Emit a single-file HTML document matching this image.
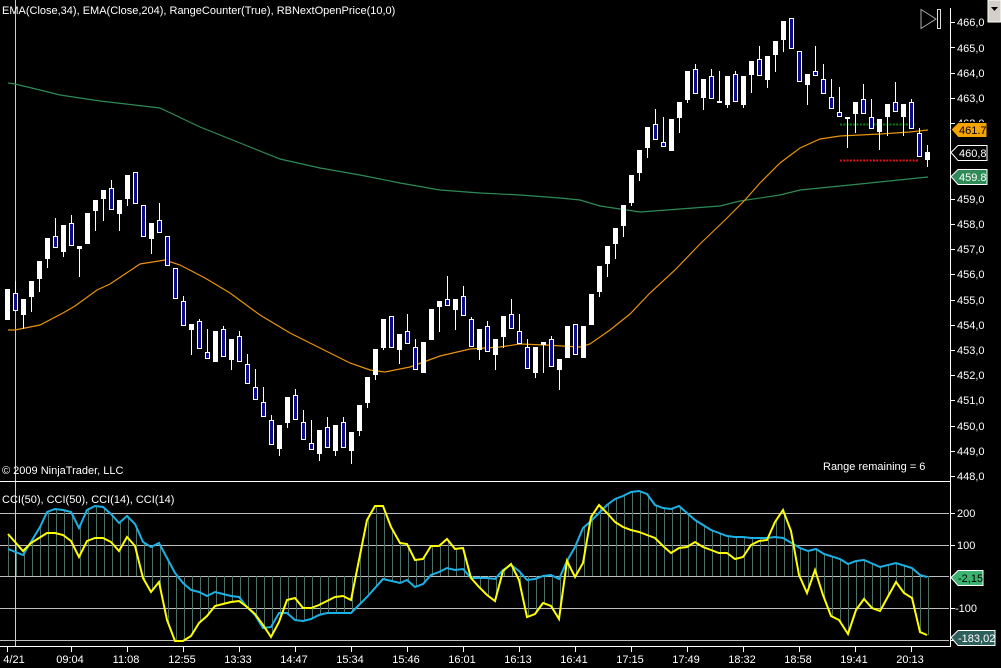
<!DOCTYPE html>
<html><head><meta charset="utf-8"><style>
html,body{margin:0;padding:0;background:#000;width:1001px;height:668px;overflow:hidden}
svg{display:block}
text{font-family:"Liberation Sans",Arial,sans-serif;font-size:11px;fill:#fff}
.w{fill:#fff}
.b{fill:#0a0a8c;stroke:#fff;stroke-width:1}
</style></head><body>
<svg width="1001" height="668" viewBox="0 0 1001 668" xmlns="http://www.w3.org/2000/svg">
<rect width="1001" height="668" fill="#000"/>
<!-- CCI grid -->
<g stroke="#bdbdbd" stroke-width="1">
<line x1="0" y1="513.5" x2="949" y2="513.5"/>
<line x1="0" y1="545.5" x2="949" y2="545.5"/>
<line x1="0" y1="576.5" x2="949" y2="576.5"/>
<line x1="0" y1="608.5" x2="949" y2="608.5"/>
<line x1="0" y1="640.5" x2="949" y2="640.5"/>
</g>
<g id="hist" stroke="#4d6f64" stroke-width="1"></g>
<!-- frame lines -->
<line x1="15.5" y1="0" x2="15.5" y2="646" stroke="#ccc"/>
<line x1="0" y1="481.5" x2="950" y2="481.5" stroke="#fff"/>
<line x1="0" y1="646.5" x2="950" y2="646.5" stroke="#fff"/>
<line x1="950.5" y1="8" x2="950.5" y2="647" stroke="#fff"/>
<!-- EMAs -->
<polyline fill="none" stroke="#2e8b57" stroke-width="1.2" points="8,83 15,84 40,90 60,95 100,101 160,108 200,127 240,143 280,159 320,168 360,175 400,183 440,190 480,193 520,195 560,198 580,200 600,206 640,212 680,209 720,206 740,201 780,195 800,190 860,184 928,177"/>
<polyline fill="none" stroke="#e8930c" stroke-width="1.2" points="8,330 15,330 40,325 63,313 75,306 97,290 110,284 140,264 165,260 180,265 205,278 230,293 260,315 290,333 320,348 350,363 370,370 385,372 410,367 440,356 470,349 500,347 520,344 545,345 580,347 590,344 610,330 630,314 650,293 675,270 700,244 725,220 745,200 760,183 780,163 800,148 820,139 840,136 880,134 910,132 928,130"/>
<!-- dots -->
<line x1="840" y1="124.5" x2="916" y2="124.5" stroke="#0c7a0c" stroke-width="2" stroke-dasharray="2,1.3"/>
<line x1="840" y1="160.5" x2="918" y2="160.5" stroke="#e01010" stroke-width="2" stroke-dasharray="2,1.3"/>
<!-- wicks -->
<path stroke="#fff" stroke-width="1" fill="none" d="M15.5 281V311M23.5 299V329M31.5 281V312M39.5 261V292M47.5 238V268M55.5 218V248M63.5 225V257M71.5 215V246M79.5 246V277M95.5 200V231M103.5 190V221M111.5 180V210M119.5 200V231M127.5 175V206M151.5 223V254M159.5 203V233M183.5 296V326M191.5 324V355M199.5 319V349M207.5 329V359M223.5 326V357M231.5 339V370M239.5 331V362M247.5 354V384M255.5 369V400M263.5 387V417M271.5 415V445M279.5 425V456M287.5 397V428M295.5 389V420M303.5 410V440M311.5 420V450M319.5 430V461M327.5 417V448M335.5 425V456M343.5 417V448M351.5 432V464M359.5 405V436M367.5 377V408M375.5 349V380M383.5 319V350M399.5 334V364M407.5 314V344M415.5 339V370M439.5 301V332M447.5 276V306M455.5 299V330M463.5 286V316M471.5 317V347M479.5 329V360M487.5 321V352M495.5 339V370M503.5 316V348M511.5 299V329M519.5 314V344M527.5 339V369M535.5 347V378M543.5 342V373M551.5 336V367M559.5 359V390M599.5 266V297M607.5 246V277M615.5 228V259M623.5 205V237M631.5 175V206M639.5 150V181M647.5 127V158M655.5 109V140M663.5 117V147M679.5 102V133M687.5 71V103M695.5 64V94M703.5 79V110M711.5 69V99M719.5 71V103M727.5 76V108M735.5 71V102M743.5 76V108M751.5 61V93M759.5 46V76M767.5 56V88M775.5 41V72M783.5 21V52M807.5 74V105M815.5 46V76M823.5 64V94M831.5 79V109M839.5 87V117M847.5 117V148M855.5 102V133M863.5 84V114M871.5 99V129M879.5 119V150M887.5 104V136M895.5 82V112M903.5 104V136M911.5 99V129M919.5 128V157M927.5 145V167"/>
<!-- bodies -->
<rect class="w" x="5" y="289" width="5" height="31"/>
<rect class="b" x="13.5" y="293.5" width="4" height="17"/>
<rect class="w" x="21" y="299" width="5" height="16"/>
<rect class="w" x="29" y="281" width="5" height="16"/>
<rect class="w" x="37" y="261" width="5" height="18"/>
<rect class="w" x="45" y="238" width="5" height="21"/>
<rect class="b" x="53.5" y="236.5" width="4" height="11"/>
<rect class="w" x="61" y="225" width="5" height="27"/>
<rect class="b" x="69.5" y="223.5" width="4" height="22"/>
<rect class="w" x="77" y="246" width="5" height="3"/>
<rect class="w" x="85" y="213" width="5" height="31"/>
<rect class="w" x="93" y="200" width="5" height="11"/>
<rect class="w" x="101" y="190" width="5" height="9"/>
<rect class="b" x="109.5" y="188.5" width="4" height="21"/>
<rect class="w" x="117" y="200" width="5" height="14"/>
<rect class="w" x="125" y="175" width="5" height="24"/>
<rect class="b" x="133.5" y="172.5" width="4" height="31"/>
<rect class="b" x="141.5" y="205.5" width="4" height="31"/>
<rect class="w" x="149" y="223" width="5" height="16"/>
<rect class="b" x="157.5" y="220.5" width="4" height="12"/>
<rect class="b" x="165.5" y="236.5" width="4" height="29"/>
<rect class="b" x="173.5" y="268.5" width="4" height="30"/>
<rect class="b" x="181.5" y="301.5" width="4" height="24"/>
<rect class="w" x="189" y="324" width="5" height="6"/>
<rect class="b" x="197.5" y="321.5" width="4" height="27"/>
<rect class="b" x="205.5" y="352.5" width="4" height="6"/>
<rect class="w" x="213" y="331" width="5" height="31"/>
<rect class="b" x="221.5" y="329.5" width="4" height="27"/>
<rect class="w" x="229" y="339" width="5" height="21"/>
<rect class="b" x="237.5" y="336.5" width="4" height="25"/>
<rect class="b" x="245.5" y="364.5" width="4" height="19"/>
<rect class="b" x="253.5" y="387.5" width="4" height="12"/>
<rect class="b" x="261.5" y="402.5" width="4" height="14"/>
<rect class="b" x="269.5" y="420.5" width="4" height="24"/>
<rect class="w" x="277" y="425" width="5" height="24"/>
<rect class="w" x="285" y="397" width="5" height="26"/>
<rect class="b" x="293.5" y="395.5" width="4" height="24"/>
<rect class="b" x="301.5" y="422.5" width="4" height="17"/>
<rect class="b" x="309.5" y="443.5" width="4" height="6"/>
<rect class="w" x="317" y="430" width="5" height="24"/>
<rect class="b" x="325.5" y="427.5" width="4" height="20"/>
<rect class="w" x="333" y="425" width="5" height="26"/>
<rect class="b" x="341.5" y="422.5" width="4" height="25"/>
<rect class="w" x="349" y="432" width="5" height="19"/>
<rect class="w" x="357" y="405" width="5" height="26"/>
<rect class="w" x="365" y="377" width="5" height="26"/>
<rect class="w" x="373" y="349" width="5" height="26"/>
<rect class="w" x="381" y="319" width="5" height="29"/>
<rect class="b" x="389.5" y="316.5" width="4" height="31"/>
<rect class="w" x="397" y="334" width="5" height="16"/>
<rect class="b" x="405.5" y="331.5" width="4" height="12"/>
<rect class="b" x="413.5" y="347.5" width="4" height="22"/>
<rect class="w" x="421" y="342" width="5" height="31"/>
<rect class="w" x="429" y="309" width="5" height="31"/>
<rect class="w" x="437" y="301" width="5" height="6"/>
<rect class="b" x="445.5" y="299.5" width="4" height="6"/>
<rect class="w" x="453" y="299" width="5" height="11"/>
<rect class="b" x="461.5" y="296.5" width="4" height="19"/>
<rect class="b" x="469.5" y="319.5" width="4" height="27"/>
<rect class="w" x="477" y="329" width="5" height="21"/>
<rect class="b" x="485.5" y="326.5" width="4" height="25"/>
<rect class="w" x="493" y="339" width="5" height="16"/>
<rect class="w" x="501" y="316" width="5" height="21"/>
<rect class="b" x="509.5" y="314.5" width="4" height="14"/>
<rect class="b" x="517.5" y="331.5" width="4" height="12"/>
<rect class="b" x="525.5" y="347.5" width="4" height="21"/>
<rect class="w" x="533" y="347" width="5" height="26"/>
<rect class="w" x="541" y="342" width="5" height="3"/>
<rect class="b" x="549.5" y="339.5" width="4" height="27"/>
<rect class="w" x="557" y="359" width="5" height="11"/>
<rect class="w" x="565" y="326" width="5" height="32"/>
<rect class="b" x="573.5" y="324.5" width="4" height="30"/>
<rect class="w" x="581" y="326" width="5" height="32"/>
<rect class="w" x="589" y="294" width="5" height="31"/>
<rect class="w" x="597" y="266" width="5" height="26"/>
<rect class="w" x="605" y="246" width="5" height="18"/>
<rect class="w" x="613" y="228" width="5" height="16"/>
<rect class="w" x="621" y="205" width="5" height="21"/>
<rect class="w" x="629" y="175" width="5" height="28"/>
<rect class="w" x="637" y="150" width="5" height="23"/>
<rect class="w" x="645" y="127" width="5" height="21"/>
<rect class="b" x="653.5" y="124.5" width="4" height="15"/>
<rect class="b" x="661.5" y="142.5" width="4" height="4"/>
<rect class="w" x="669" y="119" width="5" height="32"/>
<rect class="w" x="677" y="102" width="5" height="16"/>
<rect class="w" x="685" y="71" width="5" height="29"/>
<rect class="b" x="693.5" y="69.5" width="4" height="24"/>
<rect class="w" x="701" y="79" width="5" height="19"/>
<rect class="b" x="709.5" y="76.5" width="4" height="22"/>
<rect class="w" x="717" y="101" width="5" height="2"/>
<rect class="w" x="725" y="76" width="5" height="29"/>
<rect class="b" x="733.5" y="74.5" width="4" height="27"/>
<rect class="w" x="741" y="76" width="5" height="29"/>
<rect class="w" x="749" y="61" width="5" height="14"/>
<rect class="b" x="757.5" y="59.5" width="4" height="16"/>
<rect class="w" x="765" y="56" width="5" height="24"/>
<rect class="w" x="773" y="41" width="5" height="14"/>
<rect class="w" x="781" y="21" width="5" height="19"/>
<rect class="b" x="789.5" y="18.5" width="4" height="30"/>
<rect class="b" x="797.5" y="51.5" width="4" height="30"/>
<rect class="w" x="805" y="74" width="5" height="11"/>
<rect class="b" x="813.5" y="71.5" width="4" height="4"/>
<rect class="b" x="821.5" y="79.5" width="4" height="14"/>
<rect class="b" x="829.5" y="97.5" width="4" height="11"/>
<rect class="b" x="837.5" y="112.5" width="4" height="4"/>
<rect class="w" x="845" y="117" width="5" height="2"/>
<rect class="w" x="853" y="102" width="5" height="12"/>
<rect class="b" x="861.5" y="99.5" width="4" height="14"/>
<rect class="b" x="869.5" y="117.5" width="4" height="11"/>
<rect class="w" x="877" y="119" width="5" height="13"/>
<rect class="w" x="885" y="104" width="5" height="13"/>
<rect class="b" x="893.5" y="102.5" width="4" height="9"/>
<rect class="w" x="901" y="104" width="5" height="13"/>
<rect class="b" x="909.5" y="102.5" width="4" height="26"/>
<rect class="b" x="917.5" y="133.5" width="4" height="23"/>
<rect class="w" x="925" y="152" width="5" height="8"/>
<!-- CCI lines -->
<polyline id="cy" fill="none" stroke="#1ab2e6" stroke-width="2" points="8,549 23,555 40,527 47,512 55,509 63,510 71,512 79,528 87,510 95,506 103,507 111,514 119,523 127,516 135,524 143,542 151,547 159,543 175,573 183,583 191,590 199,592 207,596 215,592 223,594 231,596 239,597 247,607 255,615 263,628 271,627 279,613 287,613 295,620 303,621 311,619 319,615 327,613 343,613 351,613 367,597 383,579 400,583 407,580 415,587 423,584 431,575 439,572 447,568 455,570 463,569 471,578 479,578 487,578 495,579 503,570 511,565 519,571 527,580 535,579 543,576 551,575 559,579 567,561 575,547 583,528 591,521 599,513 607,505 615,499 623,496 631,492 639,491 647,494 655,505 663,508 671,509 679,506 687,513 695,520 703,525 711,530 719,533 727,536 735,537 743,537 751,538 759,538 767,538 775,537 783,538 800,548 808,551 816,549 824,554 840,559 848,564 856,561 864,560 880,567 896,563 912,568 920,575 927,577"/>
<polyline id="ye" fill="none" stroke="#ffff00" stroke-width="2" points="8,534 23,551 31,543 47,533 55,533 63,535 71,541 79,557 87,541 95,538 103,538 111,542 119,551 127,537 135,546 143,578 151,592 159,582 167,620 175,641 183,641 191,636 199,623 207,616 215,606 223,604 231,602 239,601 247,607 255,614 263,625 271,637 279,622 287,600 295,598 303,608 311,608 319,605 327,601 335,597 343,596 351,600 359,560 367,520 375,506 383,506 391,527 400,543 407,544 415,560 423,559 431,546 439,546 447,539 455,549 463,548 471,578 479,587 487,595 495,601 503,571 511,564 519,580 527,617 535,614 543,603 551,606 559,619 567,561 575,577 583,563 591,517 599,505 607,513 615,522 623,527 631,530 639,532 647,535 655,538 663,546 671,553 679,548 687,547 695,542 703,547 711,550 719,553 727,553 735,559 743,557 751,545 759,541 767,540 775,522 783,510 791,531 799,575 807,593 815,570 823,595 831,616 839,620 848,634 856,610 864,599 872,608 880,611 896,582 904,593 912,598 920,632 927,635"/>
<!-- price axis -->
<g stroke="#fff">
<path d="M950 22.5h5M950 47.5h5M950 73.5h5M950 98.5h5M950 123.5h5M950 199.5h5M950 224.5h5M950 249.5h5M950 274.5h5M950 300.5h5M950 325.5h5M950 350.5h5M950 375.5h5M950 400.5h5M950 426.5h5M950 451.5h5M950 476.5h5M950 513.5h5M950 545.5h5M950 608.5h5M950 640.5h5"/>
<path d="M7.5 647v5M71.5 647v5M127.5 647v5M183.5 647v5M239.5 647v5M295.5 647v5M351.5 647v5M407.5 647v5M463.5 647v5M519.5 647v5M575.5 647v5M631.5 647v5M687.5 647v5M743.5 647v5M799.5 647v5M855.5 647v5M911.5 647v5"/>
</g>
<g>
<text x="957" y="26">466,0</text><text x="957" y="52">465,0</text><text x="957" y="77">464,0</text><text x="957" y="102">463,0</text><text x="957" y="127">462,0</text>
<text x="957" y="203">459,0</text><text x="957" y="228">458,0</text><text x="957" y="253">457,0</text><text x="957" y="278">456,0</text><text x="957" y="304">455,0</text><text x="957" y="329">454,0</text><text x="957" y="354">453,0</text><text x="957" y="379">452,0</text><text x="957" y="404">451,0</text><text x="957" y="430">450,0</text><text x="957" y="455">449,0</text><text x="957" y="480">448,0</text>
<text x="957" y="517">200</text><text x="957" y="549">100</text><text x="955" y="612">-100</text><text x="955" y="644">-200</text>
</g>
<!-- value tags -->
<path d="M951 129.5l7-7h29v15h-29z" fill="#f5a300" stroke="#000"/>
<text x="959" y="134" style="fill:#000">461.7</text>
<path d="M951 152.5l7-7h29v15h-29z" fill="#000" stroke="#fff"/>
<text x="959" y="157">460,8</text>
<path d="M951 176.5l7-7h29v15h-29z" fill="#2e8b57" stroke="#fff"/>
<text x="959" y="181">459.8</text>
<path d="M951 577.5l7-7h25v15h-25z" fill="#3cb371" stroke="#fff"/>
<text x="958" y="582" style="fill:#000">-2,15</text>
<path d="M951 637.5l7-7h37v15h-37z" fill="#2f5f5a" stroke="#fff"/>
<text x="958" y="642">-183,02</text>
<!-- time labels -->
<g text-anchor="middle">
<text x="14" y="663">4/21</text><text x="70" y="663">09:04</text><text x="126" y="663">11:08</text><text x="182" y="663">12:55</text><text x="238" y="663">13:33</text><text x="294" y="663">14:47</text><text x="350" y="663">15:34</text><text x="406" y="663">15:46</text><text x="462" y="663">16:01</text><text x="518" y="663">16:13</text><text x="574" y="663">16:41</text><text x="630" y="663">17:15</text><text x="686" y="663">17:49</text><text x="742" y="663">18:32</text><text x="798" y="663">18:58</text><text x="854" y="663">19:41</text><text x="910" y="663">20:13</text>
</g>
<!-- titles -->
<text x="2" y="14">EMA(Close,34), EMA(Close,204), RangeCounter(True), RBNextOpenPrice(10,0)</text>
<text x="2" y="474">© 2009 NinjaTrader, LLC</text>
<text x="823" y="470">Range remaining = 6</text>
<text x="2" y="503">CCI(50), CCI(50), CCI(14), CCI(14)</text>
<!-- icons -->
<path d="M921 9.5l15 9.5-15 9.5z" fill="none" stroke="#aaa" stroke-width="1"/>
<rect x="937.5" y="9.5" width="3" height="19" fill="none" stroke="#ddd"/>
<rect x="988" y="0" width="13" height="22" fill="#d4d0c8" stroke="#fff"/>
<path d="M991 7h7l-3.5 4z" fill="#000"/>
</svg>
<script>
(function(){
function pts(id){return document.getElementById(id).getAttribute('points').trim().split(/\s+/).map(function(p){var a=p.split(',');return[+a[0],+a[1]];});}
function at(P,x){for(var i=1;i<P.length;i++){if(x<=P[i][0]){var a=P[i-1],b=P[i];return a[1]+(b[1]-a[1])*(x-a[0])/(b[0]-a[0]);}}return P[P.length-1][1];}
var C=pts('cy'),Y=pts('ye'),g=document.getElementById('hist'),s='';
for(var x=8;x<=928;x+=8){var c=at(C,x),y=at(Y,x),lo=Math.min(c,y,576),hi=Math.max(c,y,576);s+='M'+(x+0.5)+' '+lo+'V'+hi;}
var p=document.createElementNS('http://www.w3.org/2000/svg','path');p.setAttribute('d',s);g.appendChild(p);
})();
</script>
</body></html>
